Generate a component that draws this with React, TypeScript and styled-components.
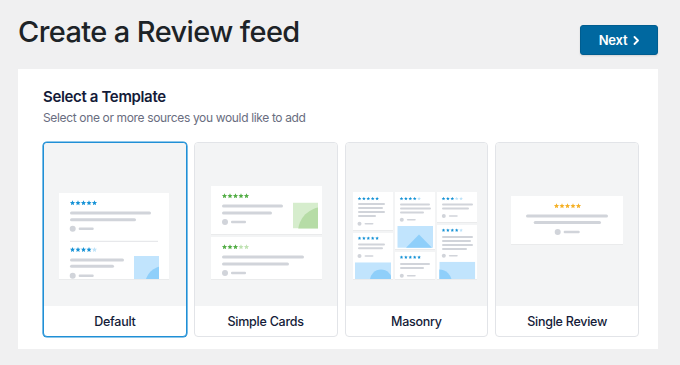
import React, { useId } from "react";
import styled, { createGlobalStyle } from "styled-components";

const GlobalStyle = createGlobalStyle`
  html, body { margin: 0; padding: 0; background: #f0f0f1; }
  body { font-family: Inter, "Noto Sans", Roboto, sans-serif; -webkit-font-smoothing: antialiased; }
  * { box-sizing: border-box; }
`;

const Page = styled.div`
  width: 680px;
  height: 365px;
  padding: 14px 22px 0 18px;
  background: #f0f0f1;
`;

const Header = styled.header`
  display: flex;
  justify-content: space-between;
  align-items: flex-start;
  margin-bottom: 14px;
`;

const Title = styled.h1`
  margin: 0;
  font-size: 29px;
  line-height: 36px;
  font-weight: 500;
  color: #1d2327;
  letter-spacing: -0.6px;
`;

const NextButton = styled.button`
  margin-top: 11px;
  width: 78px;
  height: 30px;
  display: flex;
  align-items: center;
  justify-content: center;
  gap: 6px;
  padding: 0 0 0 1px;
  background: #0068a0;
  border: 1px solid #005d90;
  border-radius: 3px;
  box-shadow: 0 1px 2px rgba(0, 0, 0, 0.12);
  color: #fff;
  font-family: inherit;
  font-size: 13px;
  font-weight: 600;
  letter-spacing: -0.2px;
  cursor: pointer;
`;

const Panel = styled.section`
  background: #fff;
  padding: 18px 19px 12px 25px;
`;

const PanelTitle = styled.h2`
  margin: 0;
  font-size: 15px;
  line-height: 20px;
  font-weight: 600;
  color: #141b38;
  letter-spacing: -0.35px;
`;

const PanelSub = styled.p`
  margin: 2px 0 0;
  font-size: 12px;
  line-height: 18px;
  color: #696d80;
  letter-spacing: -0.35px;
`;

const Grid = styled.div`
  margin-top: 15px;
  display: grid;
  grid-template-columns: repeat(4, 1fr);
  gap: 7px;
`;

const Card = styled.div<{ $selected?: boolean }>`
  height: 195px;
  display: flex;
  flex-direction: column;
  border: 1px solid ${(p) => (p.$selected ? "#1f8fd6" : "#e2e4e8")};
  box-shadow: ${(p) => (p.$selected ? "0 0 0 0.6px #1f8fd6" : "none")};
  border-radius: 4px;
  overflow: hidden;
  background: #fff;
`;

const Preview = styled.div`
  height: 163px;
  background: #f3f4f5;
  display: flex;
  align-items: flex-start;
  justify-content: center;
  border-radius: 3px 3px 0 0;
`;

const Label = styled.div`
  flex: 1;
  display: flex;
  align-items: center;
  justify-content: center;
  font-size: 12.5px;
  font-weight: 500;
  color: #141b38;
  letter-spacing: -0.25px;
`;

/* ---------- preview drawing helpers ---------- */

const GREY = "#d1d4da";

function starPoints(cx: number, cy: number, r: number) {
  const pts: string[] = [];
  for (let i = 0; i < 10; i++) {
    const rad = i % 2 === 0 ? r : r * 0.45;
    const a = -Math.PI / 2 + (i * Math.PI) / 5;
    pts.push(`${(cx + rad * Math.cos(a)).toFixed(2)},${(cy + rad * Math.sin(a)).toFixed(2)}`);
  }
  return pts.join(" ");
}

const Stars = ({
  x, y, filled, color, light, r = 2.7, step = 5.5,
}: { x: number; y: number; filled: number; color: string; light: string; r?: number; step?: number }) => (
  <g>
    {[0, 1, 2, 3, 4].map((i) => (
      <polygon key={i} points={starPoints(x + i * step, y, r)} fill={i < filled ? color : light} />
    ))}
  </g>
);

const Bar = ({ x, y, w, h = 3 }: { x: number; y: number; w: number; h?: number }) => (
  <rect x={x} y={y - h / 2} width={w} height={h} rx={h / 2} fill={GREY} />
);

const Author = ({ x, y, r = 3, w = 15 }: { x: number; y: number; r?: number; w?: number }) => (
  <g>
    <circle cx={x} cy={y} r={r} fill={GREY} />
    <rect x={x + r + 3} y={y - (r > 2.5 ? 1.25 : 0.8)} width={w} height={r > 2.5 ? 2.5 : 1.6} rx={1} fill={GREY} />
  </g>
);

const Svg = styled.svg`
  display: block;
  width: 143px;
  height: 163px;
  flex: none;
`;

const BLUE = "#1592d6";
const BLUE_L = "#bde2f8";
const IMG_L = "#c1e4fd";
const IMG_D = "#8fcffa";
const GREEN = "#52ad45";
const GREEN_L = "#bfe2b2";
const GIMG_L = "#d6edcd";
const GIMG_D = "#b6dca6";
const ORANGE = "#f5b024";

const Shadow = ({ id }: { id: string }) => (
  <filter id={id} x="-10%" y="-10%" width="120%" height="130%">
    <feDropShadow dx="0" dy="0.5" stdDeviation="0.7" floodColor="#000" floodOpacity="0.07" />
  </filter>
);

const DefaultPreview = () => {
  const id = useId().replace(/:/g, "");
  return (
    <Svg viewBox="0 0 143 163">
      <defs>
        <Shadow id={`s${id}`} />
        <clipPath id={`c${id}`}>
          <rect x="91" y="113" width="25" height="23" />
        </clipPath>
      </defs>
      <rect x="16" y="50" width="110" height="86" fill="#fff" filter={`url(#s${id})`} />
      <Stars x={29.5} y={60} filled={5} color={BLUE} light={BLUE_L} />
      <Bar x={27} y={70} w={81} />
      <Bar x={27} y={76.7} w={66} />
      <Author x={29.7} y={85.7} />
      <rect x="27" y="97.8" width="88" height="1" fill="#e1e3e7" />
      <Stars x={29.5} y={106.7} filled={4} color={BLUE} light={BLUE_L} />
      <Bar x={27} y={117} w={54} />
      <Bar x={27} y={123.3} w={44} />
      <Author x={29.7} y={132.7} />
      <g clipPath={`url(#c${id})`}>
        <rect x="91" y="113" width="25" height="23" fill={IMG_L} />
        <circle cx="121" cy="142" r="19" fill={IMG_D} />
      </g>
    </Svg>
  );
};

const SimplePreview = () => {
  const id = useId().replace(/:/g, "");
  return (
    <Svg viewBox="0 0 143 163">
      <defs>
        <Shadow id={`s${id}`} />
        <clipPath id={`c${id}`}>
          <rect x="99" y="59.5" width="25" height="26" />
        </clipPath>
      </defs>
      <rect x="17" y="43" width="111" height="48" fill="#fff" filter={`url(#s${id})`} />
      <Stars x={30.5} y={53} filled={5} color={GREEN} light={GREEN_L} />
      <Bar x={28} y={63} w={61} />
      <Bar x={28} y={70} w={50} />
      <Author x={31} y={79} />
      <g clipPath={`url(#c${id})`}>
        <rect x="99" y="59.5" width="25" height="26" fill={GIMG_L} />
        <circle cx="129" cy="89" r="25" fill={GIMG_D} />
      </g>
      <rect x="17" y="94" width="111" height="42" fill="#fff" filter={`url(#s${id})`} />
      <Stars x={30.5} y={104} filled={3} color={GREEN} light={GREEN_L} />
      <Bar x={28} y={114} w={82} />
      <Bar x={28} y={121} w={67} />
      <Author x={31} y={130} />
    </Svg>
  );
};

const MasonryPreview = () => {
  const id = useId().replace(/:/g, "");
  const st = { r: 1.9, step: 4.4 };
  return (
    <Svg viewBox="0 0 143 163">
      <defs>
        <Shadow id={`s${id}`} />
        <clipPath id={`a${id}`}>
          <rect x="10" y="119.3" width="36" height="16.7" />
        </clipPath>
        <clipPath id={`b${id}`}>
          <rect x="94.3" y="118.7" width="36" height="17.3" />
        </clipPath>
      </defs>
      {/* column 1 */}
      <rect x="8" y="49" width="40" height="38" fill="#fff" filter={`url(#s${id})`} />
      <Stars x={14.5} y={55.7} filled={5} color={BLUE} light={BLUE_L} {...st} />
      <Bar x={13} y={61} w={27} h={2} />
      <Bar x={13} y={65} w={25} h={2} />
      <Bar x={13} y={69} w={27} h={2} />
      <Bar x={13} y={73} w={18} h={2} />
      <Author x={14.5} y={80.7} r={2} w={9} />
      <rect x="8" y="90" width="40" height="46" fill="#fff" filter={`url(#s${id})`} />
      <Stars x={14.5} y={95.3} filled={5} color={BLUE} light={BLUE_L} {...st} />
      <Bar x={13} y={101.5} w={27} h={2} />
      <Bar x={13} y={105.2} w={25} h={2} />
      <Author x={14.5} y={113} r={2} w={9} />
      <g clipPath={`url(#a${id})`}>
        <rect x="10" y="119.3" width="36" height="16.7" fill={IMG_L} />
        <circle cx="36" cy="137.5" r="11" fill={IMG_D} />
      </g>
      {/* column 2 */}
      <rect x="50" y="49" width="40" height="57" fill="#fff" filter={`url(#s${id})`} />
      <Stars x={56.5} y={55.7} filled={4} color={BLUE} light={BLUE_L} {...st} />
      <Bar x={55} y={61.5} w={30} h={2} />
      <Bar x={55} y={65.5} w={31} h={2} />
      <Bar x={55} y={69.5} w={24} h={2} />
      <Author x={56.8} y={76.7} r={2} w={9} />
      <rect x="52.5" y="83" width="35.5" height="21.7" fill={IMG_L} />
      <polygon points="74,91.5 61,104.7 87,104.7" fill={IMG_D} />
      <rect x="50" y="109" width="40" height="27" fill="#fff" filter={`url(#s${id})`} />
      <Stars x={56.5} y={114.3} filled={5} color={BLUE} light={BLUE_L} {...st} />
      <Bar x={55} y={121} w={30} h={2} />
      <Bar x={55} y={125} w={24} h={2} />
      <Author x={56.8} y={132.7} r={2} w={9} />
      {/* column 3 */}
      <rect x="92" y="49" width="40" height="30" fill="#fff" filter={`url(#s${id})`} />
      <Stars x={98.5} y={55.7} filled={3} color={BLUE} light={BLUE_L} {...st} />
      <Bar x={97} y={61.5} w={31} h={2} />
      <Bar x={97} y={65.5} w={27} h={2} />
      <Author x={98.8} y={73} r={2} w={9} />
      <rect x="92" y="82" width="40" height="54" fill="#fff" filter={`url(#s${id})`} />
      <Stars x={98.5} y={87.3} filled={4} color={BLUE} light={BLUE_L} {...st} />
      <Bar x={97} y={94} w={31} h={2} />
      <Bar x={97} y={98} w={29} h={2} />
      <Bar x={97} y={102} w={31} h={2} />
      <Bar x={97} y={106} w={25} h={2} />
      <Author x={98.8} y={112.7} r={2} w={9} />
      <g clipPath={`url(#b${id})`}>
        <rect x="94.3" y="118.7" width="36" height="17.3" fill={IMG_L} />
        <circle cx="94.3" cy="139" r="12.5" fill={IMG_D} />
      </g>
    </Svg>
  );
};

const SinglePreview = () => {
  const id = useId().replace(/:/g, "");
  return (
    <Svg viewBox="0 0 143 163">
      <defs>
        <Shadow id={`s${id}`} />
      </defs>
      <rect x="15" y="53" width="112" height="48" fill="#fff" filter={`url(#s${id})`} />
      <Stars x={60.5} y={63} filled={5} color={ORANGE} light={ORANGE} />
      <Bar x={30} y={73} w={82} />
      <Bar x={37.7} y={79.5} w={67.3} />
      <Author x={61.7} y={89} w={16} />
    </Svg>
  );
};

const templates = [
  { label: "Default", Art: DefaultPreview, selected: true },
  { label: "Simple Cards", Art: SimplePreview },
  { label: "Masonry", Art: MasonryPreview },
  { label: "Single Review", Art: SinglePreview },
];

const Chevron = () => (
  <svg width="7" height="9" viewBox="0 0 7 9" aria-hidden="true">
    <path d="M1.5 1 L5 4.5 L1.5 8" fill="none" stroke="#fff" strokeWidth="1.8" strokeLinecap="round" strokeLinejoin="round" />
  </svg>
);

export default function App() {
  return (
    <>
      <GlobalStyle />
      <Page>
        <Header>
          <Title>Create a Review feed</Title>
          <NextButton>
            Next <Chevron />
          </NextButton>
        </Header>
        <Panel>
          <PanelTitle>Select a Template</PanelTitle>
          <PanelSub>Select one or more sources you would like to add</PanelSub>
          <Grid>
            {templates.map(({ label, Art, selected }) => (
              <Card key={label} $selected={selected}>
                <Preview>
                  <Art />
                </Preview>
                <Label>{label}</Label>
              </Card>
            ))}
          </Grid>
        </Panel>
      </Page>
    </>
  );
}
